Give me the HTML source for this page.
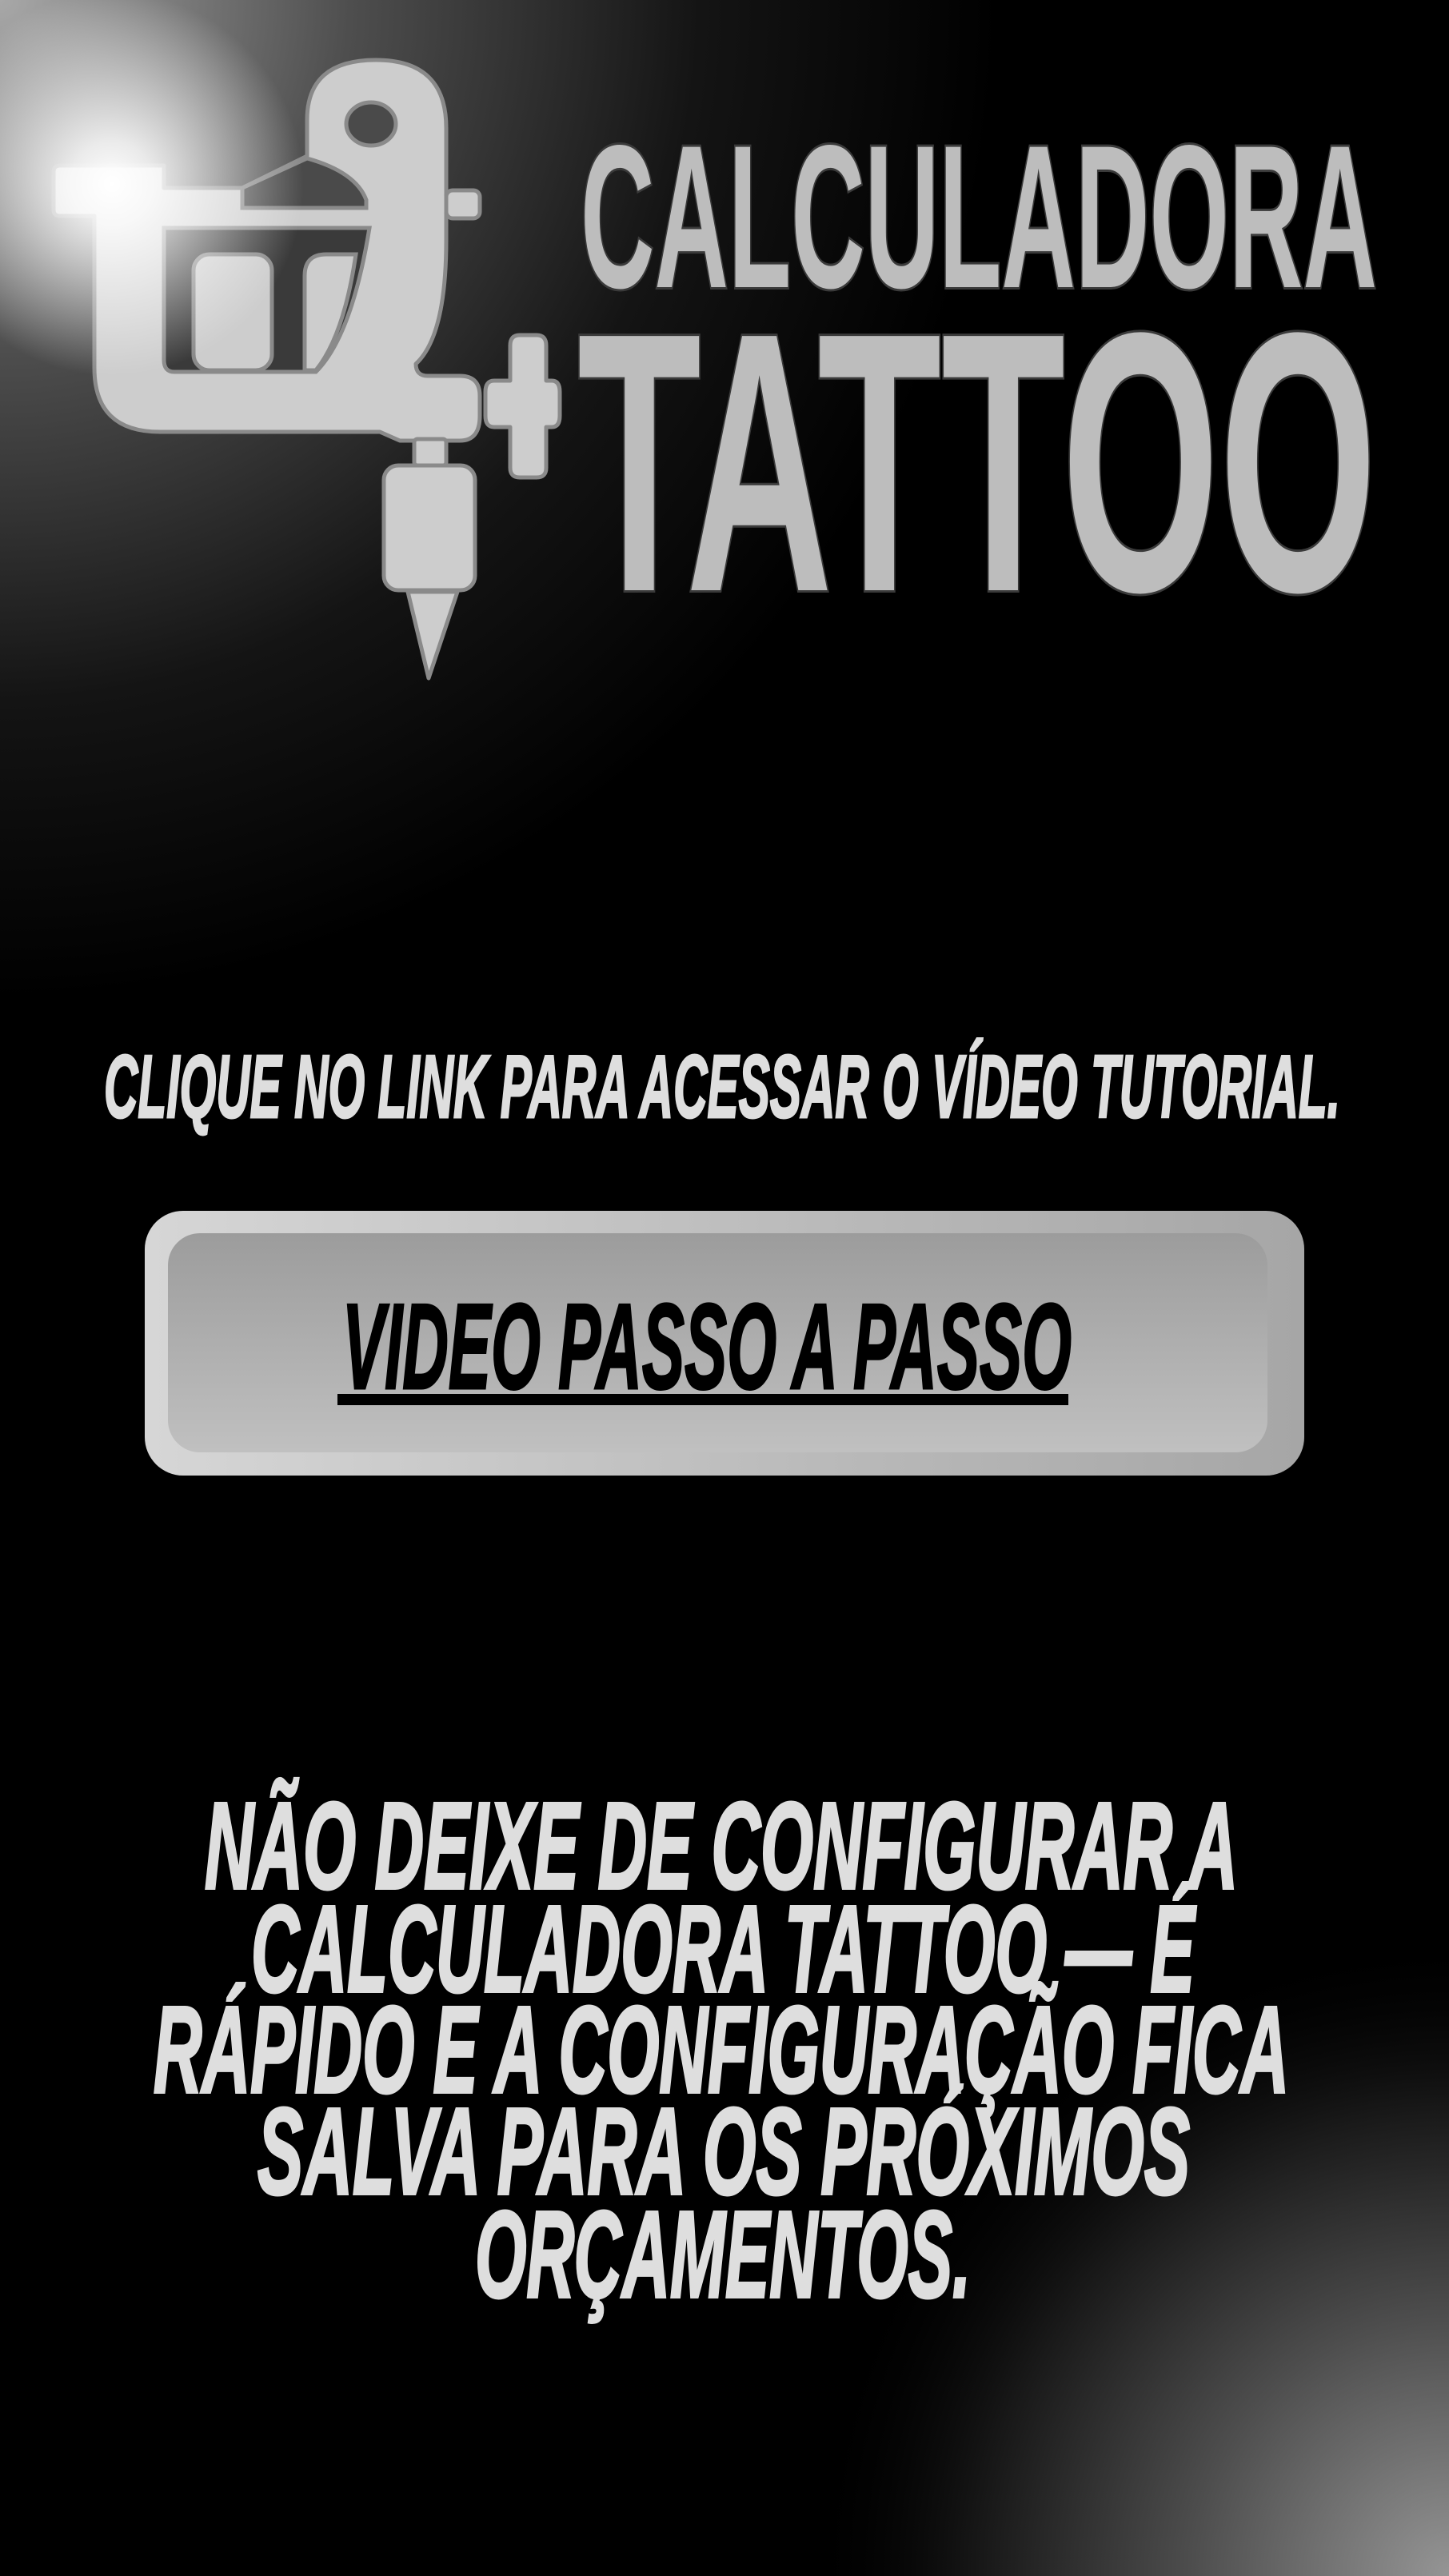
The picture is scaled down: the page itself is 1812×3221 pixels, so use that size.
<!DOCTYPE html>
<html><head><meta charset="utf-8"><style>
html,body{margin:0;padding:0;background:#000;}
svg{display:block;}
</style></head><body>
<svg width="1812" height="3221" viewBox="0 0 1812 3221" xmlns="http://www.w3.org/2000/svg">
<defs>
<radialGradient id="tl" cx="0" cy="0" r="1250" gradientUnits="userSpaceOnUse">
<stop offset="0" stop-color="#a8a8a8"/><stop offset="0.35" stop-color="#4e4e4e"/><stop offset="0.7" stop-color="#141414"/><stop offset="1" stop-color="#000"/>
</radialGradient>
<radialGradient id="br" cx="1812" cy="3221" r="800" gradientUnits="userSpaceOnUse">
<stop offset="0" stop-color="#959595"/><stop offset="0.4" stop-color="#4e4e4e"/><stop offset="0.75" stop-color="#151515"/><stop offset="1" stop-color="#000" stop-opacity="0"/>
</radialGradient>
<radialGradient id="glow" cx="140" cy="230" r="240" gradientUnits="userSpaceOnUse">
<stop offset="0" stop-color="#fff"/><stop offset="0.22" stop-color="#fff" stop-opacity="0.85"/><stop offset="1" stop-color="#fff" stop-opacity="0"/>
</radialGradient>
<linearGradient id="btnO" x1="0" y1="0" x2="1" y2="0">
<stop offset="0" stop-color="#d6d6d6"/><stop offset="1" stop-color="#a6a6a6"/>
</linearGradient>
<linearGradient id="btnI" x1="0" y1="0" x2="0" y2="1">
<stop offset="0" stop-color="#9c9c9c"/><stop offset="1" stop-color="#c0c0c0"/>
</linearGradient>
</defs>
<rect width="1812" height="3221" fill="#000"/>
<rect width="1812" height="1500" fill="url(#tl)"/>
<rect x="900" y="2300" width="912" height="921" fill="url(#br)"/>

<!-- machine -->
<g fill="#cdcdcd" stroke="#8a8a8a" stroke-width="5" stroke-linejoin="round">
<path d="M118,270 L118,460 Q118,540 200,540 L475,540 L500,551 L575,551 Q600,551 600,520 L600,495 Q600,470 575,470 L535,470 Q520,470 520,455 Q558,420 558,300 L558,160 Q558,75 470,75 Q384,75 384,150 L384,195 L303,235 L205,235 L205,207 L75,207 Q67,207 67,215 L67,262 Q67,270 75,270 Z"/>
<rect x="558" y="238" width="42" height="35" rx="8"/>
<rect x="518" y="549" width="40" height="33" rx="4"/>
<rect x="480" y="582" width="114" height="156" rx="18"/>
<path d="M510,740 L572,740 L536,848 Z"/>
<path d="M638,432 Q638,419 650,419 L671,419 Q683,419 683,432 L683,476 L690,476 Q700,476 700,490 L700,520 Q700,534 690,534 L683,534 L683,585 Q683,597 671,597 L650,597 Q638,597 638,585 L638,534 L618,534 Q607,534 607,520 L607,490 Q607,476 618,476 L638,476 Z"/>
</g>
<g stroke="#8a8a8a" stroke-width="5">
<path d="M205,285 L462,285 Q440,420 395,465 L218,465 Q205,465 205,450 Z" fill="#3a3a3a"/>
<path d="M303,235 L384,198 Q445,215 458,250 L458,260 L303,260 Z" fill="#4a4a4a"/>
<rect x="242" y="318" width="98" height="145" rx="20" fill="#cdcdcd"/>
<path d="M381,345 Q381,318 408,318 L445,318 Q430,420 395,463 L381,463 Z" fill="#cdcdcd"/>
<ellipse cx="464" cy="155" rx="31" ry="27" fill="#4a4a4a"/>
</g>
<rect width="1812" height="700" fill="url(#glow)"/>

<!-- logo text -->
<g font-family="Liberation Sans, sans-serif" font-weight="bold" fill="#bdbdbd" stroke="#3a3a3a" stroke-width="6" paint-order="stroke">
<text x="726" y="359" font-size="255" textLength="996" lengthAdjust="spacingAndGlyphs">CALCULADORA</text>
<text x="722" y="738" font-size="462" textLength="1000" lengthAdjust="spacingAndGlyphs">TATTOO</text>
</g>

<g font-family="Liberation Sans, sans-serif" font-weight="bold" font-style="italic">
<text x="130" y="1397" font-size="111" fill="#dedede" stroke="#dedede" stroke-width="3" textLength="1546" lengthAdjust="spacingAndGlyphs">CLIQUE NO LINK PARA ACESSAR O VÍDEO TUTORIAL.</text>

<rect x="181" y="1514" width="1450" height="331" rx="48" fill="url(#btnO)"/>
<rect x="210" y="1542" width="1375" height="274" rx="40" fill="url(#btnI)"/>
<text x="428" y="1736" font-size="152" fill="#000" stroke="#000" stroke-width="3" textLength="912" lengthAdjust="spacingAndGlyphs">VIDEO PASSO A PASSO</text>
<rect x="422" y="1743" width="914" height="14" fill="#000"/>

<g fill="#dedede" stroke="#dedede" stroke-width="4" font-size="154">
<text x="256" y="2361" textLength="1292" lengthAdjust="spacingAndGlyphs">NÃO DEIXE DE CONFIGURAR A</text>
<text x="314" y="2490" textLength="1180" lengthAdjust="spacingAndGlyphs">CALCULADORA TATTOO — É</text>
<text x="192" y="2616" textLength="1420" lengthAdjust="spacingAndGlyphs">RÁPIDO E A CONFIGURAÇÃO FICA</text>
<text x="322" y="2743" textLength="1166" lengthAdjust="spacingAndGlyphs">SALVA PARA OS PRÓXIMOS</text>
<text x="594" y="2872" textLength="620" lengthAdjust="spacingAndGlyphs">ORÇAMENTOS.</text>
</g>
</g>
</svg>
</body></html>
